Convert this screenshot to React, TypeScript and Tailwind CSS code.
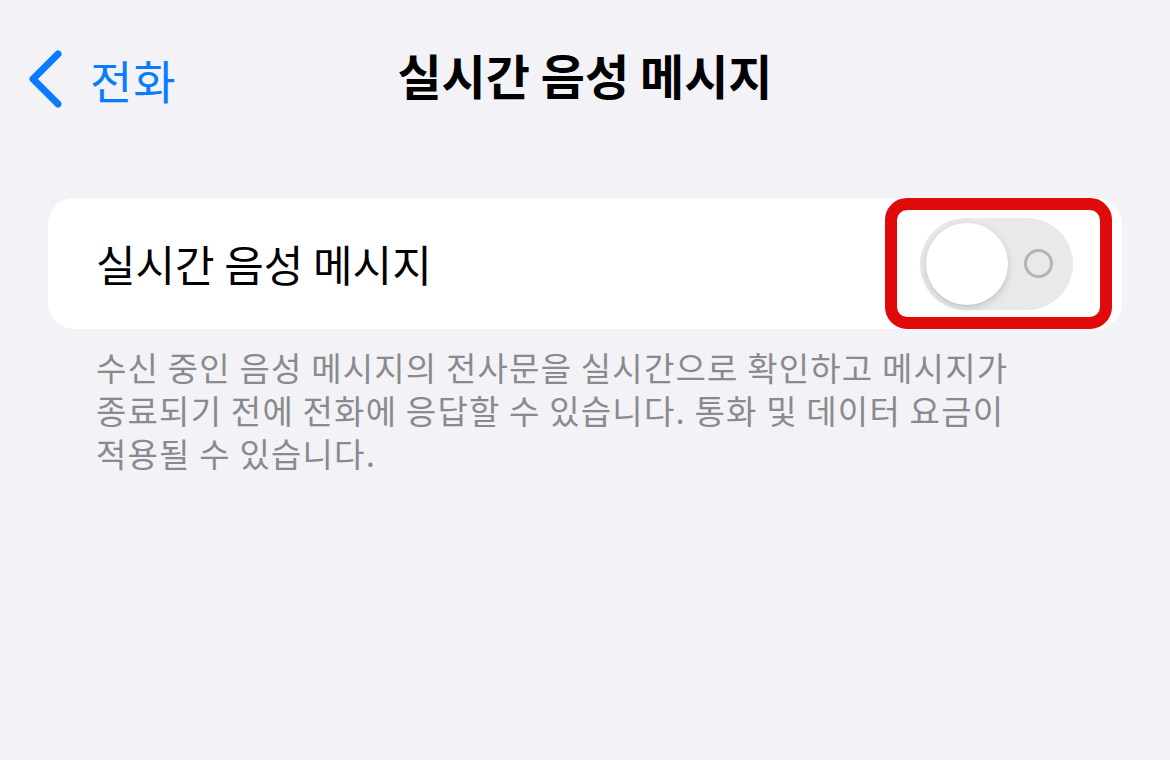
import React from 'react';

const font = { fontFamily: '"Noto Sans CJK KR", "Noto Sans", sans-serif' };

const footerLines = [
    '수신 중인 음성 메시지의 전사문을 실시간으로 확인하고 메시지가',
    '종료되기 전에 전화에 응답할 수 있습니다. 통화 및 데이터 요금이',
    '적용될 수 있습니다.',
];

function Toggle() {
    return (
        <div className="relative w-[153px] h-[92px] rounded-full bg-[#e9e9ea] flex items-center">
            <div className="ml-[6px] w-[82px] h-[82px] rounded-full bg-white shadow-[0_3px_8px_rgba(0,0,0,0.15),0_1px_1px_rgba(0,0,0,0.06)]" />
            <div className="ml-[16px] w-[29px] h-[29px] rounded-full border-[3px] border-[#b3b3b3]" />
        </div>
    );
}

export default function App() {
    return (
        <div className="w-[1170px] h-[760px] bg-[#f2f2f7] overflow-hidden" style={font}>
            {/* Nav bar */}
            <div className="relative h-[160px]">
                <div className="absolute left-[26px] top-[50px] flex items-center">
                    <svg width="38" height="58" viewBox="0 0 38 58" fill="none">
                        <path d="M32 4 L7 29 L32 54" stroke="#0a7aff" strokeWidth="7" strokeLinecap="round" strokeLinejoin="round" />
                    </svg>
                    <span className="ml-[26px] text-[46px] leading-none tracking-[1px] text-[#0a7aff]">전화</span>
                </div>
                <div className="pt-[50px] text-center text-[48px] leading-none font-bold text-black">
                    실시간 음성 메시지
                </div>
            </div>

            {/* Card */}
            <div className="mx-[48px] mt-[38px] h-[131px] rounded-[26px] bg-white flex items-center pl-[48px] pr-[10px]">
                <span className="flex-1 text-[43px] leading-none text-black">실시간 음성 메시지</span>
                <div className="relative w-[227px] h-[131px] flex items-center justify-center">
                    <div className="absolute inset-0 rounded-[22px] border-[12px] border-[#e00a0a]" />
                    <div className="ml-[-4px]">
                        <Toggle />
                    </div>
                </div>
            </div>

            {/* Footer */}
            <div className="pl-[96px] pt-[17px] text-[33px] tracking-[1.2px] text-[#8a8a8e]">
                {footerLines.map((line) => (
                    <div key={line} className="h-[43px] leading-[43px] whitespace-nowrap">
                        {line}
                    </div>
                ))}
            </div>
        </div>
    );
}
